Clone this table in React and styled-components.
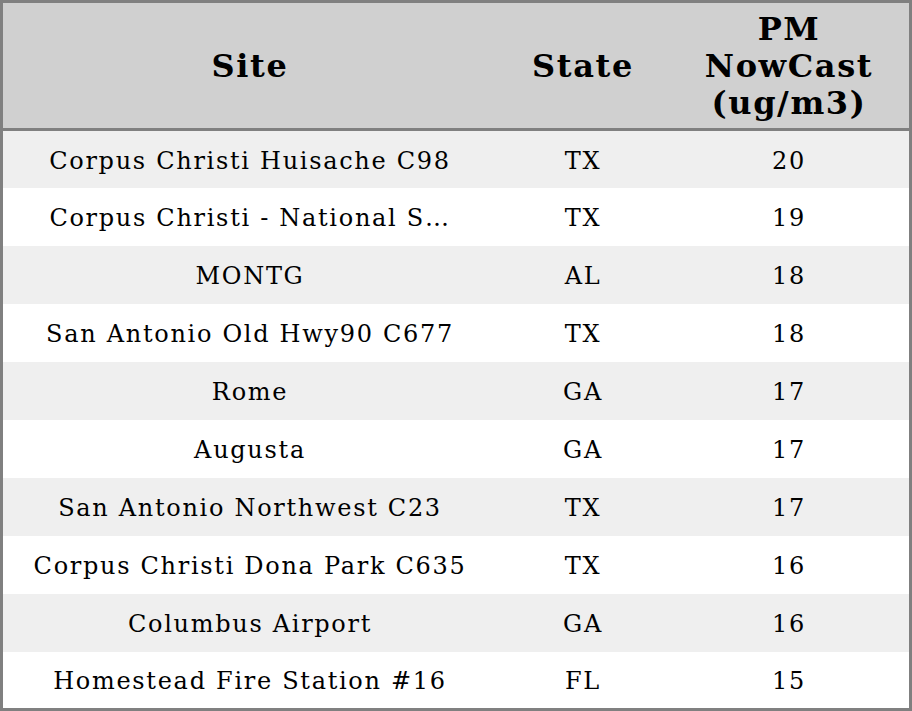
import React from "react";
import styled, { createGlobalStyle } from "styled-components";

const GlobalStyle = createGlobalStyle`
  html, body {
    margin: 0;
    padding: 0;
    background: #ffffff;
  }
`;

const rows = [
  { site: "Corpus Christi Huisache C98", state: "TX", pm: 20 },
  { site: "Corpus Christi - National S…", state: "TX", pm: 19 },
  { site: "MONTG", state: "AL", pm: 18 },
  { site: "San Antonio Old Hwy90 C677", state: "TX", pm: 18 },
  { site: "Rome", state: "GA", pm: 17 },
  { site: "Augusta", state: "GA", pm: 17 },
  { site: "San Antonio Northwest C23", state: "TX", pm: 17 },
  { site: "Corpus Christi Dona Park C635", state: "TX", pm: 16 },
  { site: "Columbus Airport", state: "GA", pm: 16 },
  { site: "Homestead Fire Station #16", state: "FL", pm: 15 },
];

const Table = styled.table`
  width: 912px;
  height: 711px;
  border-collapse: collapse;
  border: 3px solid #808080;
  box-sizing: border-box;
  table-layout: fixed;
  font-family: "DejaVu Serif", serif;
  color: #000000;
`;

const HeadRow = styled.tr`
  background: #d0d0d0;
  height: 128px;
  border-bottom: 3px solid #808080;
`;

const HeadCell = styled.th`
  width: ${(p) => p.$width}px;
  padding: 2px 0 0;
  font-size: 32px;
  font-weight: bold;
  line-height: 37px;
  letter-spacing: 1.6px;
  text-align: center;
  vertical-align: middle;
`;

const Row = styled.tr`
  background: ${(p) => (p.$striped ? "#efefef" : "#ffffff")};
  height: 57px;
`;

const Cell = styled.td`
  padding: 3px 0 0;
  font-size: 24px;
  letter-spacing: 1.7px;
  text-align: center;
  vertical-align: middle;
  white-space: nowrap;
`;

export default function App() {
  return (
    <>
      <GlobalStyle />
      <Table>
        <thead>
          <HeadRow>
            <HeadCell $width={494}>Site</HeadCell>
            <HeadCell $width={172}>State</HeadCell>
            <HeadCell $width={240}>
              PM
              <br />
              NowCast
              <br />
              (ug/m3)
            </HeadCell>
          </HeadRow>
        </thead>
        <tbody>
          {rows.map((r, i) => (
            <Row key={i} $striped={i % 2 === 0}>
              <Cell>{r.site}</Cell>
              <Cell>{r.state}</Cell>
              <Cell>{r.pm}</Cell>
            </Row>
          ))}
        </tbody>
      </Table>
    </>
  );
}
